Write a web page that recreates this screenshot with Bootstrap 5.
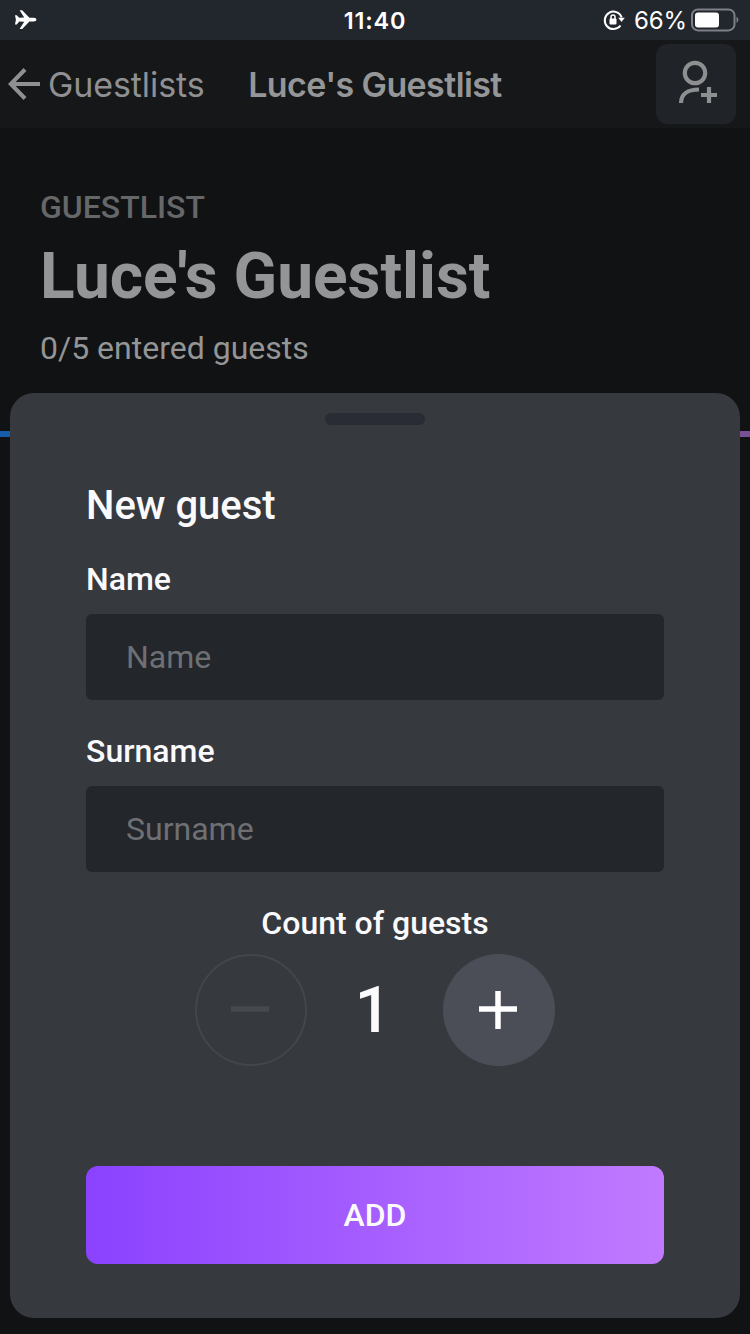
<!DOCTYPE html>
<html lang="en">
<head>
<meta charset="utf-8">
<meta name="viewport" content="width=device-width, initial-scale=1">
<title>Luce's Guestlist</title>
<link href="https://cdn.jsdelivr.net/npm/bootstrap@5.3.0/dist/css/bootstrap.min.css" rel="stylesheet">
<style>
  body { background: #111214; color: #fafafc; font-family: Roboto, sans-serif; font-size: 32px; line-height: 38px; height: 1334px; overflow: hidden; }
  svg { display: block; flex: none; }
  .status-bar { height: 40px; background: #22262d; font-family: Inter, sans-serif; padding: 0 11px; }
  .side { flex: 1 1 0; }
  .plane { margin-left: 2px; }
  .clock { font-size: 23.5px; font-weight: 600; letter-spacing: .8px; color: #fff; padding-top: 1px; }
  .percent { font-size: 24px; color: #fff; margin: 1px 4px 0 9px; letter-spacing: -.1px; }
  .app-bar { height: 88px; background: #161719; color: #959697; font-family: Inter, sans-serif; font-size: 34px; padding: 0 14px; }
  .back-link { color: #8f9092; gap: 7px; }
  .back-link svg { margin-left: -6px; }
  .back-text { letter-spacing: -.1px; padding-top: 2px; }
  .bar-title { font-weight: 600; letter-spacing: -.6px; padding-top: 1px; }
  .add-person { width: 80px; height: 80px; border-radius: 12px; background: #202327; }
  .page-head { padding: 60px 40px 0; height: 303px; color: #949596; }
  .kicker { color: #666769; font-weight: 500; }
  .page-title { font-size: 64px; line-height: 75px; font-weight: 700; margin: 13px 0 15px; }
  .accent-line { height: 6px; background: linear-gradient(90deg, #155da8, #7a4f94); }
  .sheet { left: 10px; right: 10px; bottom: 16px; height: 925px; border-radius: 24px; background: #36393e; padding: 20px 76px 54px; }
  .grip { width: 100px; height: 12px; border-radius: 6px; background: #2a2c35; }
  .sheet-title { font-size: 40px; line-height: 47px; font-weight: 500; margin: 57px 0 31px; }
  .form-label { font-weight: 500; margin-bottom: 16px; }
  .form-control, .form-control:focus { height: 86px; font-size: 32px; line-height: 38px; padding: 0 40px; border: 0; border-radius: 6px; background: #23262b; color: #fff; }
  .form-control::placeholder { color: #6e7074; opacity: 1; }
  .counter-label { font-weight: 500; }
  .counter { width: 360px; margin-top: 12px; }
  .round { width: 112px; height: 112px; padding: 0 2px 0 0; background: #4c4e57; border: 0; }
  .round:disabled { background: transparent; border: 2px solid #44464c; opacity: 1; }
  .count { font-size: 64px; line-height: 75px; font-weight: 500; padding-right: 4px; }
  .btn-add { height: 98px; font-size: 32px; font-weight: 500; border: 0; border-radius: 12px; color: #fafafc; background: linear-gradient(90deg, #8b42ff, #c07aff); }
</style>
</head>
<body>
<div class="status-bar d-flex align-items-center">
  <div class="side">
    <svg class="plane" width="24" height="22" viewBox="0 0 24 22" fill="#fff"><path d="M2 6.200h1.800l2.400 2.500 5-.1L6.600 1.200h2.600l7.200 7.500h4.400c1.700 0 2.600.9 2.600 1.900s-.9 2-2.600 2h-4.400L9.200 20H6.600l4.600-7.300-5-.1-2.400 2.900H2l.9-4.700z"/></svg>
  </div>
  <div class="clock">11:40</div>
  <div class="side d-flex justify-content-end align-items-center">
    <svg width="22" height="22" viewBox="0 0 22 22" fill="none" stroke="#fff" stroke-width="2"><path d="M17.500 16.500a8.700 8.700 0 1 1 1.200-8"/><path d="M15.200 8.700h6.600l-3.300 4.200z" fill="#fff" stroke="none"/><path d="M8 10V8a2 2 0 0 1 4 0v2" stroke-width="1.500"/><rect x="6.500" y="9.500" width="7" height="6" rx="1" fill="#fff" stroke="none"/></svg>
    <div class="percent">66%</div>
    <svg width="48" height="24" viewBox="0 0 48 24"><rect x="1" y="1.400" width="42.500" height="21" rx="6" fill="none" stroke="#7d8086" stroke-width="2"/><rect x="4" y="4.500" width="24" height="15" rx="3" fill="#fff"/><path d="M45.500 8.500c2.500 1.500 2.500 5 0 6.500z" fill="#7d8086"/></svg>
  </div>
</div>
<nav class="app-bar d-flex align-items-center">
  <a class="side back-link d-flex align-items-center text-decoration-none" href="#">
    <svg width="33" height="32" viewBox="0 0 33 32" fill="none" stroke="#8f9092" stroke-width="4"><path d="M17 1.500 2.800 16 17 30.500M3 16h29"/></svg>
    <span class="back-text">Guestlists</span>
  </a>
  <div class="bar-title text-nowrap">Luce's Guestlist</div>
  <div class="side d-flex justify-content-end">
    <button class="btn add-person p-0 border-0" aria-label="Add guest">
      <svg width="80" height="80" viewBox="0 0 80 80" fill="none" stroke="#8e8f91" stroke-width="4.200"><circle cx="39" cy="29" r="10.200"/><path d="M25 59c0-9 7-13.500 18-13.500M53 43v16M45 51h16"/></svg>
    </button>
  </div>
</nav>
<header class="page-head">
  <div class="kicker">GUESTLIST</div>
  <h1 class="page-title">Luce's Guestlist</h1>
  <div>0/5 entered guests</div>
</header>
<div class="accent-line"></div>
<form class="sheet position-absolute d-flex flex-column">
  <div class="grip mx-auto"></div>
  <h2 class="sheet-title">New guest</h2>
  <label class="form-label" for="name">Name</label>
  <input class="form-control" id="name" placeholder="Name">
  <label class="form-label mt-4 pt-2" for="surname">Surname</label>
  <input class="form-control" id="surname" placeholder="Surname">
  <div class="counter-label text-center mt-4 pt-2">Count of guests</div>
  <div class="counter d-flex justify-content-between align-items-center mx-auto">
    <button type="button" class="btn round rounded-circle d-flex align-items-center justify-content-center" disabled aria-label="Fewer">
      <svg width="38" height="38" viewBox="0 0 38 38"><path d="M0 18h38" stroke="#46484d" stroke-width="5.500"/></svg>
    </button>
    <div class="count">1</div>
    <button type="button" class="btn round rounded-circle d-flex align-items-center justify-content-center" aria-label="More">
      <svg width="38" height="38" viewBox="0 0 38 38"><path d="M0 18h38M19 0v38" stroke="#fff" stroke-width="5.500"/></svg>
    </button>
  </div>
  <button type="button" class="btn btn-add w-100 mt-auto">ADD</button>
</form>
<script src="https://cdn.jsdelivr.net/npm/bootstrap@5.3.0/dist/js/bootstrap.bundle.min.js"></script>
</body>
</html>
